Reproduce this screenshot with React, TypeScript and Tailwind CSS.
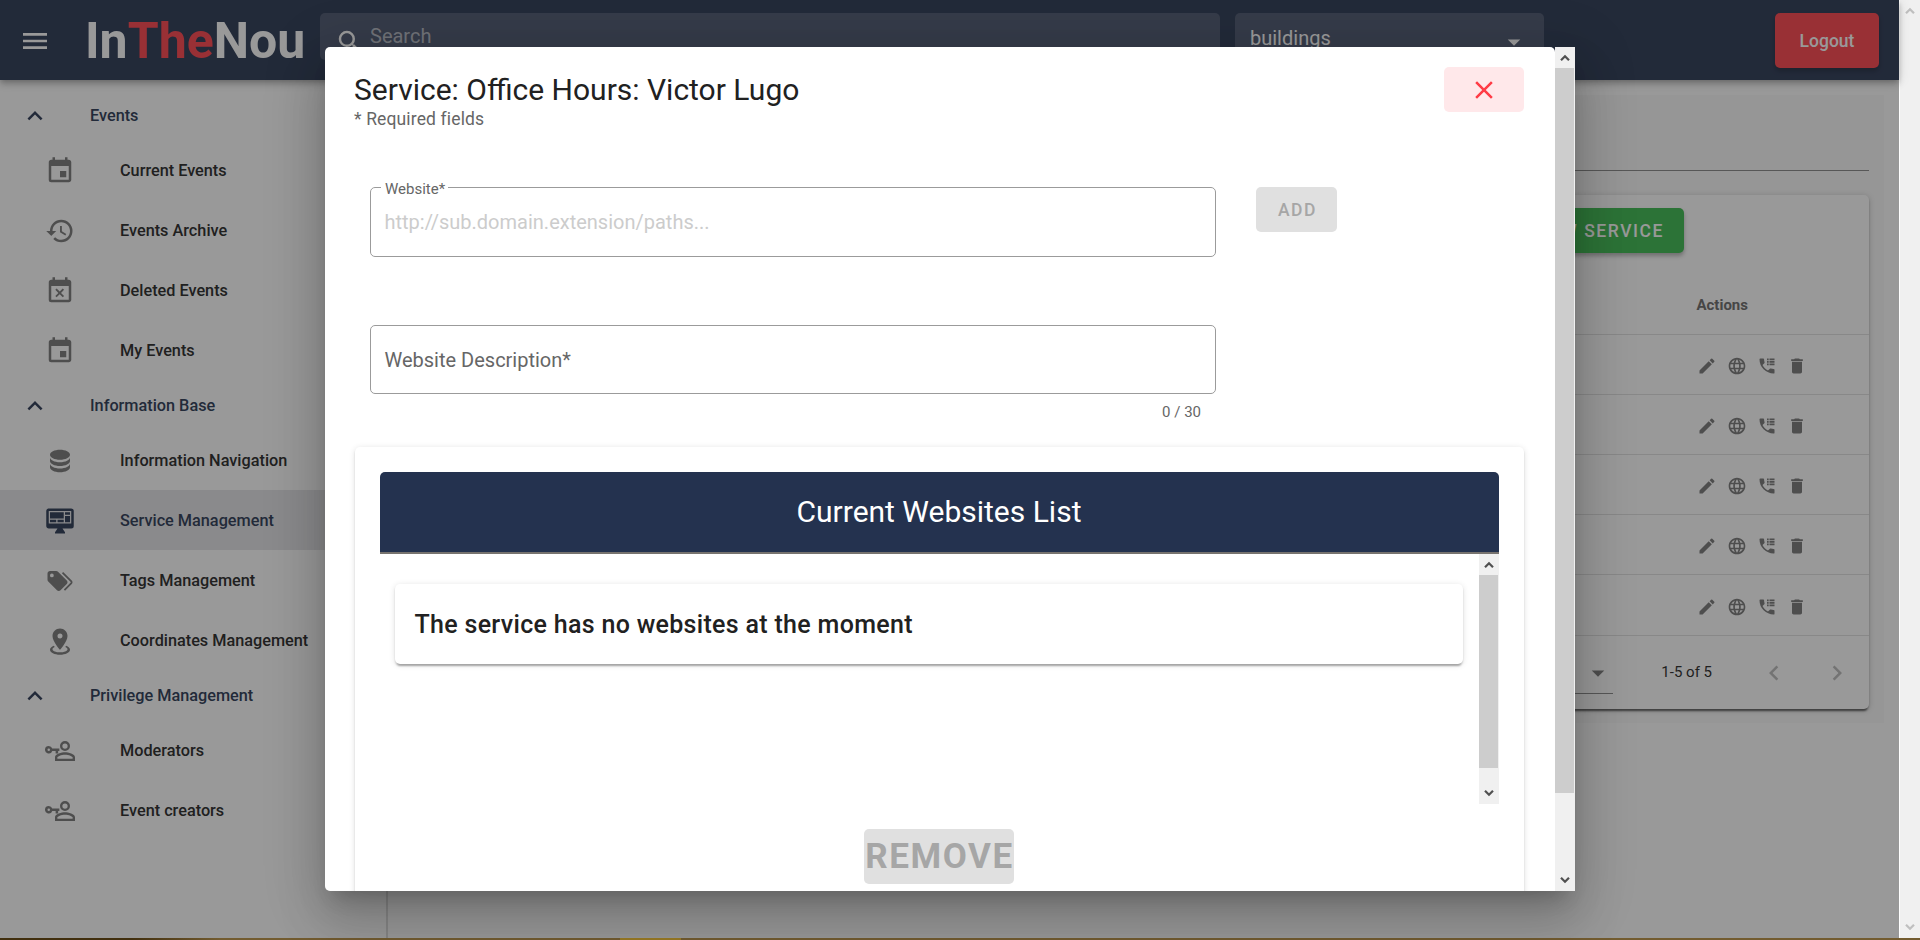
import React from "react";
import { MdEdit, MdLanguage, MdDelete, MdEvent, MdEventBusy, MdHistory, MdMenu, MdSearch, MdClose } from "react-icons/md";

const paths = {
  chevronUp: "M7.41,15.41L12,10.83L16.59,15.41L18,14L12,8L6,14L7.41,15.41Z",
  chevronLeft: "M15.41,16.58L10.83,12L15.41,7.41L14,6L8,12L14,18L15.41,16.58Z",
  chevronRight: "M8.59,16.58L13.17,12L8.59,7.41L10,6L16,12L10,18L8.59,16.58Z",
  menuDown: "M7,10L12,15L17,10H7Z",
  database:
    "M12,3C7.58,3 4,4.79 4,7C4,9.21 7.58,11 12,11C16.42,11 20,9.21 20,7C20,4.79 16.42,3 12,3M4,9V12C4,14.21 7.58,16 12,16C16.42,16 20,14.21 20,12V9C20,11.21 16.42,13 12,13C7.58,13 4,11.21 4,9M4,14V17C4,19.21 7.58,21 12,21C16.42,21 20,19.21 20,17V14C20,16.21 16.42,18 12,18C7.58,18 4,16.21 4,14Z",
  dashboard:
    "M21,14V4H3V14H21M21,2A2,2 0 0,1 23,4V16A2,2 0 0,1 21,18H14L16,21V22H8V21L10,18H3C1.89,18 1,17.1 1,16V4C1,2.89 1.89,2 3,2H21M4,5H15V10H4V5M16,5H20V7H16V5M20,8V13H16V8H20M4,11H9V13H4V11M10,11H15V13H10V11Z",
  tags: "M5.5,9A1.5,1.5 0 0,0 7,7.5A1.5,1.5 0 0,0 5.5,6A1.5,1.5 0 0,0 4,7.5A1.5,1.5 0 0,0 5.5,9M17.41,11.58C17.77,11.94 18,12.44 18,13C18,13.55 17.78,14.05 17.41,14.41L12.41,19.41C12.05,19.77 11.55,20 11,20C10.45,20 9.95,19.78 9.58,19.41L2.59,12.42C2.22,12.05 2,11.55 2,11V6C2,4.89 2.89,4 4,4H9C9.55,4 10.05,4.22 10.41,4.58L17.41,11.58M13.54,5.71L14.54,4.71L21.41,11.58C21.78,11.94 22,12.45 22,13C22,13.55 21.78,14.05 21.42,14.41L16.04,19.79L15.04,18.79L20.75,13L13.54,5.71Z",
  marker:
    "M12,2C15.31,2 18,4.66 18,7.95C18,12.41 12,19 12,19C12,19 6,12.41 6,7.95C6,4.66 8.69,2 12,2M12,6A2,2 0 0,0 10,8A2,2 0 0,0 12,10C13.11,10 14,9.1 14,8A2,2 0 0,0 12,6M20,19C20,21.21 16.42,23 12,23C7.58,23 4,21.21 4,19C4,17.71 5.22,16.56 7.11,15.83L7.75,16.74C6.67,17.19 6,17.81 6,18.5C6,19.88 8.69,21 12,21C15.31,21 18,19.88 18,18.5C18,17.81 17.33,17.19 16.25,16.74L16.89,15.83C18.78,16.56 20,17.71 20,19Z",
  accountKey:
    "M16,4A4,4 0 0,0 12,8A4,4 0 0,0 16,12A4,4 0 0,0 20,8A4,4 0 0,0 16,4M16,5.9A2.1,2.1 0 1,1 16,10.1A2.1,2.1 0 0,1 16,5.9M16,13C13.33,13 8,14.33 8,17V20H24V17C24,14.33 18.67,13 16,13M16,14.9C18.97,14.9 22.1,16.36 22.1,17V18.1H9.9V17C9.9,16.36 13,14.9 16,14.9M3,8A3,3 0 1,0 5.83,12H8.5V14H10.5V12H11.5V10H5.83A3,3 0 0,0 3,8M3,10A1,1 0 1,1 3,12A1,1 0 0,1 3,10Z",
  phoneLog:
    "M20,15.5A1,1 0 0,1 21,16.5V20A1,1 0 0,1 20,21A17,17 0 0,1 3,4A1,1 0 0,1 4,3H7.5A1,1 0 0,1 8.5,4C8.5,5.24 8.7,6.45 9.07,7.57C9.18,7.92 9.1,8.31 8.82,8.58L6.62,10.79C8.06,13.62 10.38,15.93 13.21,17.38L15.41,15.18C15.69,14.9 16.08,14.82 16.43,14.93C17.55,15.3 18.75,15.5 20,15.5M12,3H14V5H12V3M15,3H21V5H15V3M12,6H14V8H12V6M15,6H21V8H15V6M12,9H14V11H12V9M15,9H21V11H15V9Z",
};

function Glyph({ d, className }: { d: string; className: string }) {
  return (
    <svg viewBox="0 0 24 24" className={className} fill="currentColor" fillRule="evenodd">
      <path d={d} />
    </svg>
  );
}

const iconCls = "size-[30px] shrink-0";

function Item({ icon, label, active }: { icon: React.ReactNode; label: string; active?: boolean }) {
  return (
    <li className={active ? "flex h-[60px] items-center bg-[#e4e4e7] pt-[2px] pl-[45px] text-[#24324f]" : "flex h-[60px] items-center pt-[2px] pl-[45px] text-[#757575]"}>
      {icon}
      <span className={active ? "ml-[45px]" : "ml-[45px] text-[#212121]"}>{label}</span>
    </li>
  );
}

function Group({ title, children }: { title: string; children: React.ReactNode }) {
  return (
    <section>
      <h2 className="flex h-[50px] items-center pt-[2px] pl-5 text-[#24324f]">
        <Glyph d={paths.chevronUp} className={iconCls} />
        <span className="ml-10">{title}</span>
      </h2>
      <ul>{children}</ul>
    </section>
  );
}

function Arrow({ up, className }: { up?: boolean; className: string }) {
  return (
    <svg viewBox="0 0 10 8" className={className} fill="none" stroke="currentColor" strokeWidth="2.2">
      <path d={up ? "M1 6.2L5 2.2L9 6.2" : "M1 1.8L5 5.8L9 1.8"} />
    </svg>
  );
}

export default function App() {
  return (
    <div className="relative flex h-[940px] w-[1920px] flex-col overflow-hidden bg-white font-[Roboto,sans-serif] text-[16.25px] font-medium">
      <div className="flex h-[938px]">
        <div className="relative flex w-[1899px] flex-col">
          <header className="z-10 flex h-20 shrink-0 bg-[#24324f] text-white shadow-[0_2px_5px_-1px_rgba(0,0,0,.2),0_5px_6px_rgba(0,0,0,.14),0_1px_12px_rgba(0,0,0,.12)]">
            <MdMenu className="mt-[25px] ml-[19px] size-8" />
            <div className="ml-[34px] w-[235px] pt-px text-[50px] leading-[80px] font-bold">
              In<span className="text-[#ff3d47]">The</span>Nou
            </div>
            <div className="mt-[13px] flex h-[47px] w-[900px] rounded-[5px] bg-white/16 pt-[14px] pl-[15px]">
              <MdSearch className="size-[30px]" />
              <span className="-mt-[5px] ml-[5px] text-xl leading-7 font-normal text-white/60">Search</span>
            </div>
            <div className="mt-[13px] ml-[15px] flex h-[47px] w-[309px] justify-between rounded-[5px] bg-white/16 pr-[15px] pl-[15px]">
              <span className="mt-[11px] text-xl leading-7 font-normal">buildings</span>
              <Glyph d={paths.menuDown} className="mt-[14px] size-[30px]" />
            </div>
            <button className="mt-[13px] ml-[231px] h-[55px] w-[104px] rounded-[5px] bg-[#ff3d47] pt-[2px] text-[17.5px] shadow-[0_3px_5px_rgba(0,0,0,.3)]">
              Logout
            </button>
          </header>
          <div className="flex grow">
            <nav className="w-[388px] border-r-2 border-[#dcdcdc] pt-[10px]">
              <Group title="Events">
                <Item icon={<MdEvent className={iconCls} />} label="Current Events" />
                <Item icon={<MdHistory className={iconCls} />} label="Events Archive" />
                <Item icon={<MdEventBusy className={iconCls} />} label="Deleted Events" />
                <Item icon={<MdEvent className={iconCls} />} label="My Events" />
              </Group>
              <Group title="Information Base">
                <Item icon={<Glyph d={paths.database} className={iconCls} />} label="Information Navigation" />
                <Item active icon={<Glyph d={paths.dashboard} className={iconCls} />} label="Service Management" />
                <Item icon={<Glyph d={paths.tags} className={iconCls} />} label="Tags Management" />
                <Item icon={<Glyph d={paths.marker} className={iconCls} />} label="Coordinates Management" />
              </Group>
              <Group title="Privilege Management">
                <Item icon={<Glyph d={paths.accountKey} className={iconCls} />} label="Moderators" />
                <Item icon={<Glyph d={paths.accountKey} className={iconCls} />} label="Event creators" />
              </Group>
            </nav>
            <main className="grow pt-[15px] pr-[15px] pl-[15px]">
              <div className="h-[628px] bg-[#f9f9f9] px-[15px]">
                <div className="h-[76px] border-b border-[#858585]" />
                <section className="mt-6 flex h-[514px] flex-col rounded-[5px] bg-white shadow-[0_4px_2px_-2px_rgba(0,0,0,.45),0_2px_2px_rgba(0,0,0,.25),0_1px_6px_rgba(0,0,0,.2)]">
                  <div className="flex h-[80px] justify-end pt-[13px] pr-[185px]">
                    <button className="h-[45px] w-[200px] rounded-[5px] bg-[#37b94a] pt-[2px] pr-[20px] text-right text-[17.5px] tracking-[.0893em] text-white shadow-[0_3px_4px_rgba(0,0,0,.3)]">
                      NEW SERVICE
                    </button>
                  </div>
                  <div className="flex h-[60px] items-center justify-end border-b border-[#e0e0e0] pr-[121px] text-[15px] font-bold text-[#666]">
                    <span className="mt-px">Actions</span>
                  </div>
                  {[0, 1, 2, 3, 4].map((row) => (
                    <div key={row} className="flex h-[60px] items-center justify-end gap-[10px] border-b border-[#e0e0e0] pt-[3px] pr-[62px] text-[#757575] nth-[7]:h-[61px]">
                      <MdEdit className="size-5" />
                      <MdLanguage className="size-5" />
                      <Glyph d={paths.phoneLog} className="size-5" />
                      <MdDelete className="size-5" />
                    </div>
                  ))}
                  <div className="flex h-[73px] items-center justify-end pr-[17px] text-[15px] font-normal text-[#212121]">
                    <div className="mt-[10px] flex h-[33px] w-[60px] items-start justify-end border-b border-[#858585] text-[#757575]">
                      <Glyph d={paths.menuDown} className="-mt-[3px] size-[30px]" />
                    </div>
                    <span className="ml-12">1-5 of 5</span>
                    <Glyph d={paths.chevronLeft} className="mt-px ml-[47px] size-[30px] text-[#b9b9b9]" />
                    <Glyph d={paths.chevronRight} className="mt-px ml-[33px] size-[30px] text-[#b9b9b9]" />
                  </div>
                </section>
              </div>
            </main>
          </div>
          <div className="absolute inset-0 z-20 bg-[#212121]/46" />
        </div>
        <div className="flex w-[21px] flex-col items-center justify-between border-l border-white bg-[#f0f0f0] py-[7px] text-[#bfbfbf]">
          <Arrow up className="mr-px h-2 w-[10px]" />
          <Arrow className="mr-px h-2 w-[10px]" />
        </div>
      </div>
      <div className="flex h-[2px] bg-[#735c30]">
        <div className="w-[220px] bg-linear-to-r from-[#42300f] from-60% to-[#735c30]" />
        <div className="ml-[400px] w-[61px] bg-[#9a7b25]" />
      </div>

      <div className="absolute top-[47px] left-[325px] z-30 flex h-[844px] w-[1250px] rounded-l-[5px] text-[#212121] shadow-[0_14px_19px_-9px_rgba(0,0,0,.2),0_30px_48px_4px_rgba(0,0,0,.14),0_11px_58px_10px_rgba(0,0,0,.12)]">
        <div className="w-[1230px] overflow-hidden rounded-l-[5px] rounded-tr-[5px] bg-white px-[30px] pt-5">
          <div className="flex h-[94px] justify-between">
            <div>
              <h1 className="mt-[3px] -ml-px text-[30px] leading-10 font-normal">Service: Office Hours: Victor Lugo</h1>
              <p className="-mt-[3px] -ml-px text-[17.5px] leading-[25px] font-normal tracking-[.008em] text-[#666]">* Required fields</p>
            </div>
            <button className="mr-[1px] flex h-[45px] w-20 items-center justify-center rounded-[5px] bg-[#ffe8ea] pr-px text-[#ff3d47]">
              <MdClose className="size-[30px]" />
            </button>
          </div>
          <div className="mt-[26px] flex pl-[15px]">
            <div className="relative flex h-[70px] w-[846px] items-center rounded-[5px] border border-[#9b9b9b] pl-[13.5px] text-xl font-normal text-[#ccc]">
              <span className="absolute -top-[9px] left-[10px] bg-white pr-[3px] pl-1 text-[15px] leading-5 text-[#666]">Website*</span>
              http://sub.domain.extension/paths...
            </div>
            <button className="ml-10 h-[45px] w-[81px] rounded-[5px] bg-[#e0e0e0] pt-[2px] pl-[2px] text-[17.5px] tracking-[.0893em] text-[#a6a6a6]">ADD</button>
          </div>
          <div className="mt-[68px] ml-[15px] flex h-[69px] w-[846px] items-center rounded-[5px] border border-[#9b9b9b] pl-[13.5px] text-xl font-normal text-[#666]">
            Website Description*
          </div>
          <div className="mt-2 w-[846px] text-right text-[15px] leading-5 font-normal text-[#666]">0 / 30</div>
          <section className="mt-[25px] h-[500px] w-[1169px] rounded-[5px] px-[25px] pt-[25px] shadow-[0_4px_2px_-2px_rgba(0,0,0,.2),0_2px_2px_rgba(0,0,0,.14),0_1px_6px_rgba(0,0,0,.12)]">
            <h2 className="flex h-[82px] items-center justify-center rounded-t-[5px] border-b-2 border-[#77736f] bg-[#24324f] text-[30px] font-normal text-white">
              <span className="-mt-px mr-px">Current Websites List</span>
            </h2>
            <div className="flex h-[250px] justify-between pl-[15px]">
              <div className="mt-[30px] flex h-20 w-[1068px] items-center rounded-[5px] pt-[2px] pl-[19.5px] text-[25px] tracking-[.0125em] shadow-[0_4px_2px_-2px_rgba(0,0,0,.2),0_2px_2px_rgba(0,0,0,.14),0_1px_6px_rgba(0,0,0,.12)]">
                The service has no websites at the moment
              </div>
              <div className="flex w-5 flex-col items-center bg-[#f0f0f0] text-[#505050]">
                <Arrow up className="mt-[7px] mr-px mb-[6px] h-2 w-[10px]" />
                <div className="mr-px h-[193px] w-[19px] bg-[#cdcdcd]" />
                <Arrow className="mt-[21px] mr-px h-2 w-[10px]" />
              </div>
            </div>
            <div className="mt-[25px] flex justify-center pr-px">
              <button className="flex h-[55px] w-[150px] items-center justify-center rounded-[5px] bg-[#e0e0e0] pt-[2px] pl-px text-[35px] font-bold tracking-[1.5625px] text-[#a6a6a6]">
                REMOVE
              </button>
            </div>
          </section>
        </div>
        <div className="flex w-5 flex-col items-center bg-[#f0f0f0] text-[#505050]">
          <Arrow up className="mt-[7px] mr-px mb-[6px] h-2 w-[10px]" />
          <div className="mr-px h-[725px] w-[19px] bg-[#cdcdcd]" />
          <Arrow className="mt-[83px] mr-px h-2 w-[10px]" />
        </div>
      </div>
    </div>
  );
}
